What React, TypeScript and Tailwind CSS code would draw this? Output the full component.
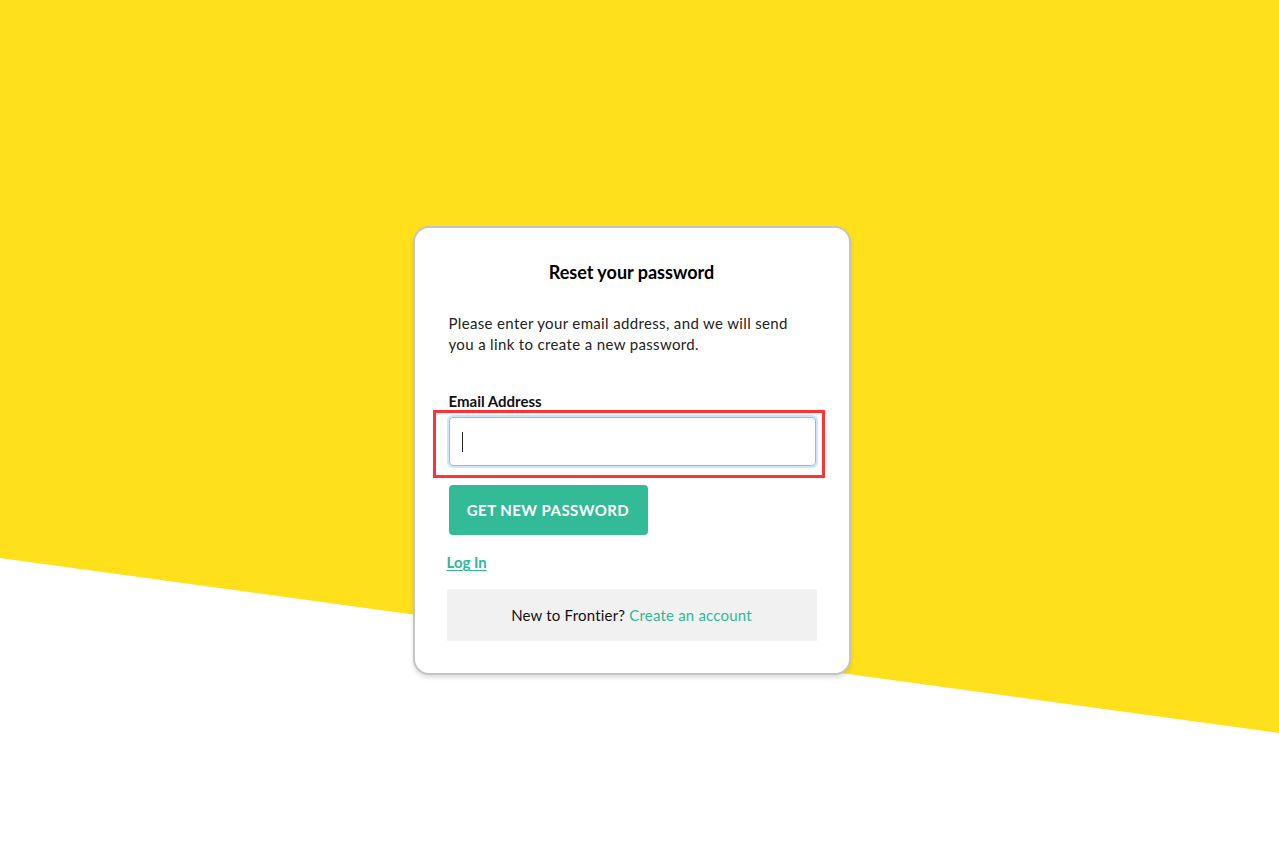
export default function App() {
  return (
    <div className="relative min-h-[848px] w-full overflow-hidden bg-white font-['Lato','Liberation_Sans',sans-serif] text-[#222]">
      {/* yellow slanted backdrop */}
      <svg
        aria-hidden="true"
        className="absolute inset-0 h-full w-full"
        viewBox="0 0 1279 848"
        preserveAspectRatio="none"
      >
        <polygon points="0,0 1279,0 1279,733 0,558" fill="#ffe01b" />
      </svg>

      <div className="relative flex justify-center pr-[16px] pt-[226px]">
        <div className="w-[438px] rounded-[16px] border-2 border-[#c4c4c4] bg-white px-8 pb-8 pt-[19px] shadow-[0_3px_4px_rgba(0,0,0,0.12)]">
          <h1 className="text-center text-[18px] font-bold leading-[50px] text-black">
            Reset your password
          </h1>

          <p className="mt-[16px] px-0.5 text-[15px] leading-[21px] tracking-[0.35px] text-[#222]">
            Please enter your email address, and we will send you a link to create a new password.
          </p>

          <label className="mt-[36px] block px-0.5 text-[15px] font-bold leading-[20px] text-[#111]">
            Email Address
          </label>

          <div className="-ml-[14px] -mr-[8px] mt-[-1px] border-[3px] border-[#ff3333] pb-[9px] pl-[13px] pr-[6px] pt-[4px]">
            <div className="flex h-[49px] items-center rounded-[4px] border border-[#86bff3] px-3 shadow-[0_0_0_2px_#cfe5fb]">
              <span className="h-[20px] w-px bg-[#222]" />
            </div>
          </div>

          <button className="ml-0.5 mt-[7px] h-[50px] w-[199px] rounded-[4px] bg-[#32bb96] text-[15px] font-bold tracking-[0.03em] text-white">
            GET NEW PASSWORD
          </button>

          <div className="mt-[17px] leading-[20px]">
            <a href="#" className="text-[15px] font-bold text-[#2fb996] underline underline-offset-2">
              Log In
            </a>
          </div>

          <div className="mt-[17px] flex h-[52px] items-center justify-center bg-[#f1f1f1] text-[15px] tracking-[0.2px] text-[#111]">
            New to Frontier?&nbsp;
            <a href="#" className="text-[#2fb996]">
              Create an account
            </a>
          </div>
        </div>
      </div>
    </div>
  );
}
